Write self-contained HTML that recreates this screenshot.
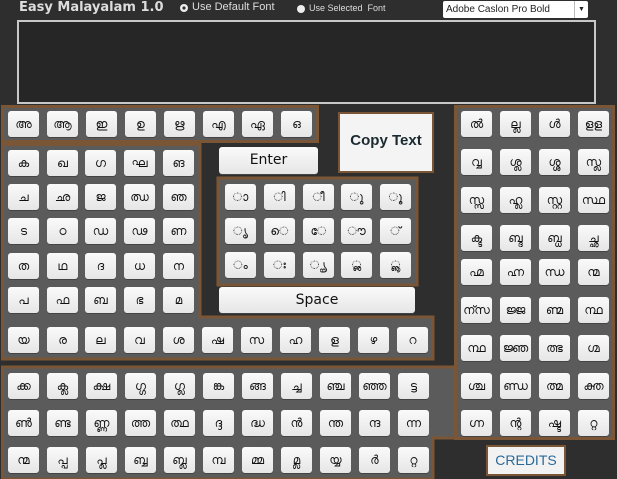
<!DOCTYPE html>
<html><head><meta charset="utf-8"><style>
body{margin:0;width:617px;height:479px;background:#2e2e2e;position:relative;overflow:hidden;font-family:"Liberation Sans","DejaVu Sans",sans-serif}
.k{position:absolute;width:31px;height:26px;background:linear-gradient(#fafafa,#e6e6e6);border-radius:3px;font-size:12px;line-height:26px;text-align:center;color:#111;overflow:hidden;box-shadow:0 1px 0 #444}
.t{position:absolute;color:#ddd}
</style></head><body>
<svg width="617" height="479" style="position:absolute;left:0;top:0">
<g fill="#5b5b5b" stroke="#7a5536" stroke-width="3">
<rect x="2.5" y="106.5" width="315" height="35"/>
<polygon points="2.5,144.5 200,144.5 200,317 433,317 433,359 2.5,359"/>
<rect x="218" y="178" width="199" height="107"/>
<rect x="455.5" y="106.5" width="158" height="332"/>
<polygon points="2.5,367 455,367 455,438 433,438 433,479 2.5,479"/>
</g>
<rect x="18" y="21" width="577" height="82" fill="#262626" stroke="#c8c8c8" stroke-width="2"/>
<rect x="339" y="113" width="94" height="59" fill="#f4f4f4" stroke="#7a5536" stroke-width="2"/>
<rect x="487" y="446" width="78" height="29" fill="#f2f2f2" stroke="#7a5536" stroke-width="2"/>
<circle cx="184" cy="8" r="4" fill="#eee"/><circle cx="184" cy="8" r="1.6" fill="#333"/>
<circle cx="301" cy="9" r="4" fill="#eee"/>
</svg>
<div class="t" style="left:19px;top:0;font-size:13px;font-weight:bold;font-family:'DejaVu Sans',sans-serif">Easy Malayalam 1.0</div>
<div class="t" style="left:192px;top:1px;font-size:11px">Use Default Font</div>
<div class="t" style="left:309px;top:3px;font-size:9px">Use Selected&nbsp; Font</div>
<div style="position:absolute;left:443px;top:1px;width:145px;height:17px;background:#fff;border-radius:2px;font-size:10px;line-height:17px;color:#222;padding-left:3px;box-sizing:border-box">Adobe Caslon Pro Bold<span style="position:absolute;right:0;top:0;width:13px;height:17px;border-left:1px solid #bbb;text-align:center;font-size:7px">▼</span></div>
<div style="position:absolute;left:339px;top:132px;width:94px;text-align:center;font-weight:bold;font-size:15px;color:#1a2a30">Copy Text</div>
<div style="position:absolute;left:487px;top:452px;width:78px;text-align:center;font-size:14px;color:#2a6a9a">CREDITS</div>
<div class="k" style="left:219px;top:147px;width:99px;height:27px;font-size:14px;line-height:27px;font-family:'DejaVu Sans',sans-serif">Enter</div>
<div class="k" style="left:219px;top:287px;width:196px;height:26px;font-size:14px;font-family:'DejaVu Sans',sans-serif">Space</div>

<div class="k" style="left:8px;top:111px">അ</div><div class="k" style="left:47px;top:111px">ആ</div><div class="k" style="left:86px;top:111px">ഇ</div><div class="k" style="left:125px;top:111px">ഉ</div><div class="k" style="left:164px;top:111px">ഋ</div><div class="k" style="left:203px;top:111px">എ</div><div class="k" style="left:242px;top:111px">ഏ</div><div class="k" style="left:281px;top:111px">ഒ</div>

<div class="k" style="left:8px;top:150px">ക</div><div class="k" style="left:47px;top:150px">ഖ</div><div class="k" style="left:85px;top:150px">ഗ</div><div class="k" style="left:124px;top:150px">ഘ</div><div class="k" style="left:163px;top:150px">ങ</div>
<div class="k" style="left:8px;top:184px">ച</div><div class="k" style="left:47px;top:184px">ഛ</div><div class="k" style="left:85px;top:184px">ജ</div><div class="k" style="left:124px;top:184px">ഝ</div><div class="k" style="left:163px;top:184px">ഞ</div>
<div class="k" style="left:8px;top:218px">ട</div><div class="k" style="left:47px;top:218px">ഠ</div><div class="k" style="left:85px;top:218px">ഡ</div><div class="k" style="left:124px;top:218px">ഢ</div><div class="k" style="left:163px;top:218px">ണ</div>
<div class="k" style="left:8px;top:253px">ത</div><div class="k" style="left:47px;top:253px">ഥ</div><div class="k" style="left:85px;top:253px">ദ</div><div class="k" style="left:124px;top:253px">ധ</div><div class="k" style="left:163px;top:253px">ന</div>
<div class="k" style="left:8px;top:287px">പ</div><div class="k" style="left:47px;top:287px">ഫ</div><div class="k" style="left:85px;top:287px">ബ</div><div class="k" style="left:124px;top:287px">ഭ</div><div class="k" style="left:163px;top:287px">മ</div>

<div class="k" style="left:8px;top:327px">യ</div><div class="k" style="left:47px;top:327px">ര</div><div class="k" style="left:85px;top:327px">ല</div><div class="k" style="left:124px;top:327px">വ</div><div class="k" style="left:163px;top:327px">ശ</div><div class="k" style="left:202px;top:327px">ഷ</div><div class="k" style="left:241px;top:327px">സ</div><div class="k" style="left:280px;top:327px">ഹ</div><div class="k" style="left:319px;top:327px">ള</div><div class="k" style="left:358px;top:327px">ഴ</div><div class="k" style="left:397px;top:327px">റ</div>

<div class="k" style="left:225px;top:184px">ാ</div><div class="k" style="left:264px;top:184px">ി</div><div class="k" style="left:303px;top:184px">ീ</div><div class="k" style="left:341px;top:184px">ു</div><div class="k" style="left:380px;top:184px">ൂ</div>
<div class="k" style="left:225px;top:218px">ൃ</div><div class="k" style="left:264px;top:218px">െ</div><div class="k" style="left:303px;top:218px">േ</div><div class="k" style="left:341px;top:218px">ൗ</div><div class="k" style="left:380px;top:218px">്</div>
<div class="k" style="left:225px;top:252px">ം</div><div class="k" style="left:264px;top:252px">ഃ</div><div class="k" style="left:303px;top:252px">ൄ</div><div class="k" style="left:341px;top:252px">ൢ</div><div class="k" style="left:380px;top:252px">ൣ</div>

<div class="k" style="left:461px;top:111px">ൽ</div><div class="k" style="left:500px;top:111px">ല്ല</div><div class="k" style="left:539px;top:111px">ൾ</div><div class="k" style="left:578px;top:111px">ളള</div>
<div class="k" style="left:461px;top:149px">വ്വ</div><div class="k" style="left:500px;top:149px">ശ്ല</div><div class="k" style="left:539px;top:149px">ശ്ശ</div><div class="k" style="left:578px;top:149px">സ്ല</div>
<div class="k" style="left:461px;top:187px">സ്സ</div><div class="k" style="left:500px;top:187px">ഹ്ല</div><div class="k" style="left:539px;top:187px">സ്റ്റ</div><div class="k" style="left:578px;top:187px">സ്ഥ</div>
<div class="k" style="left:461px;top:225px">ക്ട</div><div class="k" style="left:500px;top:225px">ബ്ദ</div><div class="k" style="left:539px;top:225px">ബ്ധ</div><div class="k" style="left:578px;top:225px">ച്ഛ</div>
<div class="k" style="left:461px;top:259px">ഹ്മ</div><div class="k" style="left:500px;top:259px">ഹ്ന</div><div class="k" style="left:539px;top:259px">ന്ധ</div><div class="k" style="left:578px;top:259px">ന്മ</div>
<div class="k" style="left:461px;top:297px">ന്സ</div><div class="k" style="left:500px;top:297px">ജ്ജ</div><div class="k" style="left:539px;top:297px">ണ്മ</div><div class="k" style="left:578px;top:297px">ന്ഥ</div>
<div class="k" style="left:461px;top:335px">ന്ഥ</div><div class="k" style="left:500px;top:335px">ജ്ഞ</div><div class="k" style="left:539px;top:335px">ത്ഭ</div><div class="k" style="left:578px;top:335px">ഗ്മ</div>
<div class="k" style="left:461px;top:373px">ശ്ച</div><div class="k" style="left:500px;top:373px">ണ്ഡ</div><div class="k" style="left:539px;top:373px">ത്മ</div><div class="k" style="left:578px;top:373px">ക്ത</div>
<div class="k" style="left:461px;top:410px">ഗ്ന</div><div class="k" style="left:500px;top:410px">ന്റ</div><div class="k" style="left:539px;top:410px">ഷ്ട</div><div class="k" style="left:578px;top:410px">റ്റ</div>

<div class="k" style="left:8px;top:373px">ക്ക</div><div class="k" style="left:47px;top:373px">ക്ല</div><div class="k" style="left:86px;top:373px">ക്ഷ</div><div class="k" style="left:125px;top:373px">ഗ്ഗ</div><div class="k" style="left:164px;top:373px">ഗ്ല</div><div class="k" style="left:203px;top:373px">ങ്ക</div><div class="k" style="left:242px;top:373px">ങ്ങ</div><div class="k" style="left:281px;top:373px">ച്ച</div><div class="k" style="left:320px;top:373px">ഞ്ച</div><div class="k" style="left:359px;top:373px">ഞ്ഞ</div><div class="k" style="left:398px;top:373px">ട്ട</div>
<div class="k" style="left:8px;top:410px">ൺ</div><div class="k" style="left:47px;top:410px">ണ്ട</div><div class="k" style="left:86px;top:410px">ണ്ണ</div><div class="k" style="left:125px;top:410px">ത്ത</div><div class="k" style="left:164px;top:410px">ത്ഥ</div><div class="k" style="left:203px;top:410px">ദ്ദ</div><div class="k" style="left:242px;top:410px">ദ്ധ</div><div class="k" style="left:281px;top:410px">ൻ</div><div class="k" style="left:320px;top:410px">ന്ത</div><div class="k" style="left:359px;top:410px">ന്ദ</div><div class="k" style="left:398px;top:410px">ന്ന</div>
<div class="k" style="left:8px;top:447px">ന്മ</div><div class="k" style="left:47px;top:447px">പ്പ</div><div class="k" style="left:86px;top:447px">പ്ല</div><div class="k" style="left:125px;top:447px">ബ്ബ</div><div class="k" style="left:164px;top:447px">ബ്ല</div><div class="k" style="left:203px;top:447px">മ്പ</div><div class="k" style="left:242px;top:447px">മ്മ</div><div class="k" style="left:281px;top:447px">മ്ല</div><div class="k" style="left:320px;top:447px">യ്യ</div><div class="k" style="left:359px;top:447px">ർ</div><div class="k" style="left:398px;top:447px">റ്റ</div>
</body></html>
